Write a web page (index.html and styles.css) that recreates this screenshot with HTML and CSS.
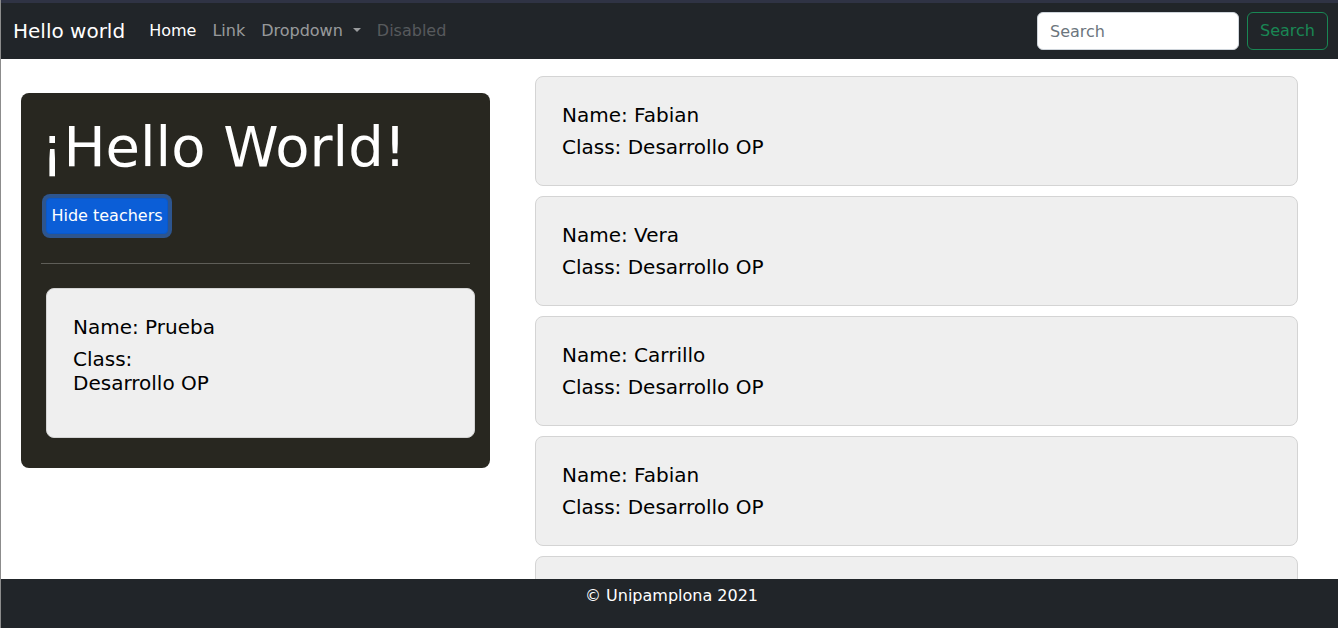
FILE: index.html
```html
<!DOCTYPE html>
<html lang="es">
<head>
<meta charset="utf-8">
<title>Hello world</title>
<link rel="stylesheet" href="styles.css">
</head>
<body>
<div class="page">
  <nav class="navbar">
    <a class="brand" href="#">Hello world</a>
    <ul class="nav">
      <li><a class="nav-link active" href="#">Home</a></li>
      <li><a class="nav-link" href="#">Link</a></li>
      <li><a class="nav-link dropdown" href="#">Dropdown</a></li>
      <li><a class="nav-link disabled" href="#">Disabled</a></li>
    </ul>
    <form class="search">
      <input class="search-input" type="search" placeholder="Search">
      <button class="search-btn" type="button">Search</button>
    </form>
  </nav>
  <main class="main">
    <section class="jumbo">
      <h1 class="display">¡Hello World!</h1>
      <button class="btn-hide" type="button">Hide teachers</button>
      <hr class="sep">
      <div class="card card-inner">
        <h5 class="line">Name: Prueba</h5>
        <h5 class="line">Class:<br>Desarrollo OP</h5>
      </div>
    </section>
    <section class="list">
      <div class="card">
        <h5 class="line">Name: Fabian</h5>
        <h5 class="line">Class: Desarrollo OP</h5>
      </div>
      <div class="card">
        <h5 class="line">Name: Vera</h5>
        <h5 class="line">Class: Desarrollo OP</h5>
      </div>
      <div class="card">
        <h5 class="line">Name: Carrillo</h5>
        <h5 class="line">Class: Desarrollo OP</h5>
      </div>
      <div class="card">
        <h5 class="line">Name: Fabian</h5>
        <h5 class="line">Class: Desarrollo OP</h5>
      </div>
      <div class="card"></div>
    </section>
  </main>
  <footer class="footer">© Unipamplona 2021</footer>
</div>
</body>
</html>
```
FILE: styles.css
```css
* { box-sizing: border-box; }
html, body { margin: 0; padding: 0; }
body {
  font-family: "DejaVu Sans", sans-serif;
  font-size: 16px;
  line-height: 1.5;
  color: #212529;
  background: #fff;
  overflow: hidden;
}
.page {
  height: 628px;
  border-left: 1px solid #8c8c8c;
}
.navbar {
  display: flex;
  align-items: center;
  height: 59px;
  background: #212529;
  border-top: 3px solid #2f3344;
  padding: 0 10px 0 12px;
}
.brand {
  font-size: 20px;
  line-height: 30px;
  color: #fff;
  text-decoration: none;
  margin-right: 16px;
}
.nav {
  display: flex;
  list-style: none;
  margin: 0;
  padding: 0;
  flex: 1;
}
.nav-link {
  display: block;
  padding: 8px;
  color: rgba(255,255,255,.55);
  text-decoration: none;
}
.nav-link.active { color: #fff; }
.nav-link.disabled { color: rgba(255,255,255,.25); }
.dropdown::after {
  content: "";
  display: inline-block;
  margin-left: 10px;
  vertical-align: .255em;
  border-top: .3em solid;
  border-right: .3em solid transparent;
  border-left: .3em solid transparent;
  border-bottom: 0;
}
.search { display: flex; }
.search-input {
  width: 202px;
  height: 38px;
  margin-right: 8px;
  padding: 6px 12px;
  font: inherit;
  color: #212529;
  background: #fff;
  border: 1px solid #ced4da;
  border-radius: 6px;
}
.search-input::placeholder { color: #6c757d; }
.search-btn {
  height: 38px;
  width: 81px;
  padding: 6px 12px;
  font: inherit;
  color: #198754;
  background: transparent;
  border: 1px solid #198754;
  border-radius: 6px;
}
.main {
  display: flex;
  align-items: flex-start;
  gap: 45px;
  height: 520px;
  overflow: hidden;
  padding: 17px 40px 0 20px;
}
.jumbo {
  flex: 0 0 469px;
  margin-top: 17px;
  background: #282720;
  border-radius: 8px;
  padding: 20px 20px 30px;
}
.display {
  margin: 0 0 18px;
  font-size: 56px;
  font-weight: 400;
  line-height: 1.2;
  color: #fff;
}
.btn-hide {
  display: block;
  margin-left: 5px;
  width: 122px;
  height: 36px;
  padding: 0;
  font: inherit;
  font-size: 16px;
  color: #fff;
  background: #0b5ed7;
  border: 1px solid #0a58ca;
  border-radius: 4px;
  box-shadow: 0 0 0 4px rgba(49,132,253,.5);
}
.sep {
  margin: 29px 0 24px;
  border: 0;
  border-top: 1px solid #5f5e58;
}
.list {
  flex: 1;
  display: flex;
  flex-direction: column;
  gap: 10px;
}
.card {
  flex: 0 0 auto;
  background: #efefef;
  border: 1px solid #d4d4d4;
  border-radius: 8px;
  padding: 26px;
  height: 110px;
}
.card-inner {
  height: 150px;
  margin: 0 -5px 0 5px;
}
.line {
  margin: 0 0 8px;
  font-size: 20px;
  font-weight: 400;
  line-height: 1.2;
  color: #000;
}
.line:last-child { margin-bottom: 0; }
.footer {
  height: 49px;
  padding: 5px 0 0 4px;
  background: #212529;
  color: #fff;
  text-align: center;
}
```
